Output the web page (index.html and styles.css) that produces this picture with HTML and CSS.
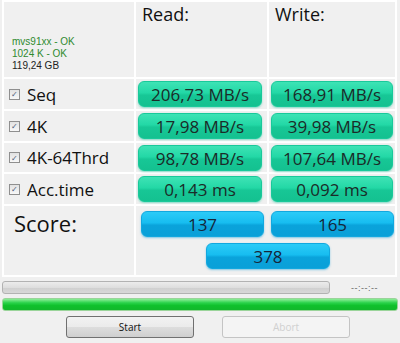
FILE: index.html
```
<!DOCTYPE html>
<html lang="en">
<head>
  <meta charset="UTF-8">
  <title>AS SSD Benchmark</title>
  <link rel="stylesheet" href="styles.css">
</head>
<body>
  <div class="grid">
    <div class="cell info">
      <div class="ok">mvs91xx - OK</div>
      <div class="ok">1024 K - OK</div>
      <div>119,24 GB</div>
    </div>
    <div class="cell head">Read:</div>
    <div class="cell head">Write:</div>

    <div class="cell name"><span class="check">&#10003;</span>Seq</div>
    <div class="cell val mid"><div class="box">206,73 MB/s</div></div>
    <div class="cell val"><div class="box">168,91 MB/s</div></div>

    <div class="cell name"><span class="check">&#10003;</span>4K</div>
    <div class="cell val mid"><div class="box">17,98 MB/s</div></div>
    <div class="cell val"><div class="box">39,98 MB/s</div></div>

    <div class="cell name"><span class="check">&#10003;</span>4K-64Thrd</div>
    <div class="cell val mid"><div class="box">98,78 MB/s</div></div>
    <div class="cell val"><div class="box">107,64 MB/s</div></div>

    <div class="cell name"><span class="check">&#10003;</span>Acc.time</div>
    <div class="cell val mid"><div class="box">0,143 ms</div></div>
    <div class="cell val"><div class="box">0,092 ms</div></div>

    <div class="cell score-label">Score:</div>
    <div class="cell score-area">
      <div class="score-row">
        <div class="box blue read-score">137</div>
        <div class="box blue write-score">165</div>
      </div>
      <div class="box blue total">378</div>
    </div>
  </div>

  <div class="progress-row">
    <div class="bar grey"></div>
    <div class="time">--:--:--</div>
  </div>
  <div class="bar green"></div>

  <div class="buttons">
    <button class="btn">Start</button>
    <button class="btn disabled">Abort</button>
  </div>
</body>
</html>
```
FILE: styles.css
```
body {
  margin: 0;
  background: #f0f0f0;
  font-family: "Open Sans", "Noto Sans", Arial, sans-serif;
  color: #111;
  width: 400px;
  height: 343px;
  overflow: hidden;
}
.grid {
  display: grid;
  grid-template-columns: 130px 131px 126px;
  grid-template-rows: 75px 30px 30px 29px 30px 69px;
  gap: 2px;
  width: 395px;
  margin-left: 2px;
  padding: 2px;
  background: #fff;
  box-sizing: border-box;
}
.cell {
  background: #f0f0f0;
}
.info {
  display: flex;
  flex-direction: column;
  justify-content: flex-end;
  padding: 0 0 5px 8px;
  font-family: "Liberation Sans", Arial, sans-serif;
  font-size: 10px;
  line-height: 12px;
  color: #222;
}
.ok {
  color: #2f8a2f;
}
.head {
  font-size: 18px;
  padding: 1px 0 0 6px;
  line-height: 22px;
}
.name {
  display: flex;
  align-items: center;
  font-size: 17px;
  padding-left: 5px;
}
.check {
  display: inline-flex;
  align-items: center;
  justify-content: center;
  width: 9px;
  height: 9px;
  border: 1px solid #8f8f8f;
  background: linear-gradient(#e2e2e2, #f8f8f8);
  font-size: 8px;
  line-height: 1;
  color: #4a5a7a;
  margin-right: 7px;
}
.val {
  padding: 2px;
}
.val.mid {
  padding-right: 5px;
}
.box {
  height: 26px;
  border-radius: 6px;
  border: 1px solid #19c99a;
  background: linear-gradient(#3ee3b5 0%, #23d8a6 45%, #17c796 55%, #14c190 100%);
  box-shadow: 0 1px 2px rgba(30, 200, 160, 0.5);
  display: flex;
  align-items: center;
  justify-content: center;
  font-size: 17px;
  color: #1b2b28;
  box-sizing: border-box;
}
.score-label {
  font-size: 22px;
  padding: 2px 0 0 10px;
  line-height: 30px;
}
.score-area {
  grid-column: 2 / 4;
  display: flex;
  flex-direction: column;
  padding-top: 5px;
  gap: 6px;
}
.score-row {
  display: flex;
  gap: 7px;
  padding-left: 5px;
}
.box.blue {
  border-color: #12a8df;
  background: linear-gradient(#2ccbf7 0%, #17bdf0 45%, #0aa3db 55%, #0aa0d8 100%);
  box-shadow: 0 1px 2px rgba(20, 160, 220, 0.5);
  color: #15263a;
}
.read-score,
.write-score {
  width: 123px;
}
.total {
  width: 124px;
  margin-left: 70px;
}
.progress-row {
  display: flex;
  align-items: center;
  margin-top: 4px;
  padding-left: 2px;
}
.bar {
  height: 13px;
  border-radius: 3px;
  box-sizing: border-box;
}
.grey {
  width: 328px;
  border: 1px solid #b2b2b2;
  background: linear-gradient(#ececec 0%, #dedede 50%, #cfcfcf 51%, #d8d8d8 100%);
}
.time {
  font-family: "Liberation Sans", Arial, sans-serif;
  font-size: 9px;
  color: #666;
  margin-left: 21px;
  letter-spacing: 0.5px;
}
.green {
  width: 396px;
  margin: 4px 0 0 2px;
  border: 1px solid #9ad49a;
  background: linear-gradient(#8fee9a 0%, #29d24a 35%, #0fc02c 60%, #12b82c 100%);
}
.buttons {
  display: flex;
  gap: 28px;
  padding-left: 66px;
  margin-top: 5px;
}
.btn {
  width: 128px;
  height: 22px;
  border: 1px solid #707070;
  border-radius: 3px;
  background: linear-gradient(#f2f2f2 0%, #ebebeb 50%, #dddddd 51%, #cfcfcf 100%);
  font-family: "Open Sans", Arial, sans-serif;
  font-size: 10px;
  color: #111;
  padding: 0;
}
.btn.disabled {
  border-color: #c4c4c4;
  background: #f4f4f4;
  color: #d0d0d0;
}
```
